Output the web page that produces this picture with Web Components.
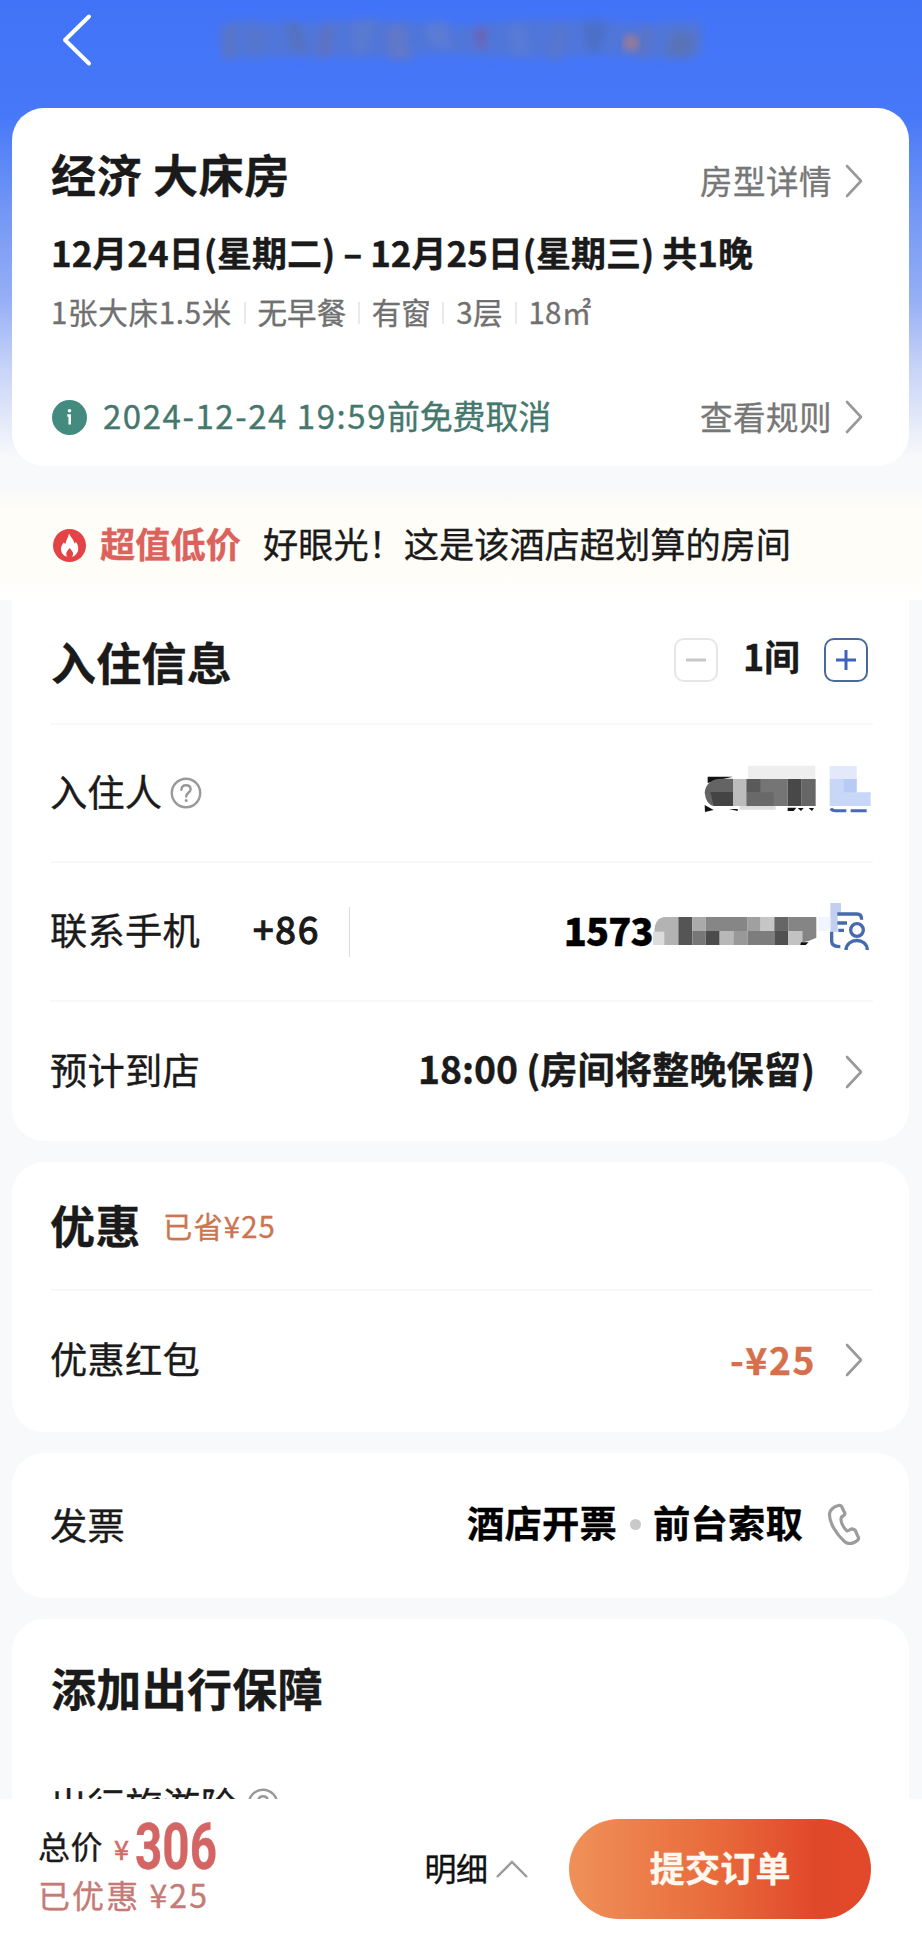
<!DOCTYPE html>
<html lang="zh-CN">
<head>
<meta charset="utf-8">
<title>订单填写</title>
<style>
body{margin:0;background:#f8f9fa;color:#1a1a1a;font-family:"Noto Sans CJK SC",sans-serif}
</style>
</head>
<body>
<booking-page></booking-page>
<script>
const define = (name, html, Base = HTMLElement) => customElements.define(name, class extends Base {
  constructor(){ super(); this.attachShadow({mode:'open'}).innerHTML = html; }
});

/* Text run of a fixed width: letter spacing (or horizontal scale) is adapted to the width. */
customElements.define('fit-text', class extends HTMLElement {
  constructor(){
    super();
    this.attachShadow({mode:'open'}).innerHTML = `<style>
      :host{display:block;flex:none;line-height:1.2;padding-bottom:.11em;white-space:pre;box-sizing:border-box;-webkit-text-stroke:.35px currentColor}
      span{display:inline-block;transform-origin:0 50%}</style><span><slot></slot></span>`;
  }
  connectedCallback(){
    const w = +this.getAttribute('w'), size = +this.getAttribute('size');
    this.style.fontSize = size + 'px';
    this.style.width = w + 'px';
    const span = this.shadowRoot.querySelector('span');
    const natural = span.getBoundingClientRect().width;
    if (this.hasAttribute('squeeze')) span.style.transform = `scaleX(${w / natural})`;
    else span.style.letterSpacing = (w - natural) / this.textContent.length + 'px';
  }
});

define('chevron-icon', `<style>:host{display:block;flex:none;width:18px;height:34px;margin-right:10px}svg{display:block}</style>
<svg width="18" height="34" viewBox="0 0 18 34" fill="none" stroke="#999" stroke-width="2.6" stroke-linejoin="round" stroke-linecap="round"><path d="M2 2L16 17L2 32"/></svg>`);

define('help-icon', `<style>:host{display:block;flex:none;margin-left:8px}svg{display:block}</style>
<svg width="32" height="32" viewBox="0 0 32 32" fill="none" stroke="#999" stroke-width="2.4"><circle cx="16" cy="16" r="14.2"/><path d="M11.4 12.8C11.5 9.8 13.5 8.3 16 8.3C18.8 8.3 20.6 10 20.6 12.4C20.6 15.4 16.2 15.8 16.2 19.6" stroke-linecap="round"/><circle cx="16.2" cy="23.6" r="1.5" fill="#999" stroke="none"/></svg>`);

define('info-card', `<style>:host{display:block;box-sizing:border-box;margin:0 13px 0 12px;background:#fff;border-radius:32px;overflow:hidden}</style><slot></slot>`);

define('info-row', `<style>:host{display:flex;align-items:center;box-sizing:border-box;margin:0 36px 0 38px}
:host([line]){border-bottom:2px solid #f8f8f8}</style><slot></slot>`);

define('top-bar', `<style>:host{display:block;height:108px}svg{display:block}</style>
<svg width="922" height="108" viewBox="0 0 922 108">
<defs><filter id="b" x="-10%" y="-30%" width="120%" height="160%"><feGaussianBlur stdDeviation="4"/></filter></defs>
<g filter="url(#b)" opacity=".6" fill="#5877c6">
<path d="M220 24L240 20L300 24L340 20L420 22L460 26L520 20L600 20L640 24L702 20V56L650 58L600 54L540 58L440 54L380 58L300 56L222 60Z"/>
<path d="M222 32L236 22V58H222Z" fill="#6675a6"/><path d="M246 24L266 32L262 58L250 48Z" fill="#6376ad"/><path d="M285 22H300L310 56L290 50Z" fill="#62729f"/>
<path d="M322 26H336L328 58H316Z" fill="#706f9d"/><path d="M350 22L378 18L370 50L354 56Z" fill="#687eb8"/><path d="M384 28L404 22L412 60H390Z" fill="#727aac"/>
<path d="M425 26L446 20L452 50L430 44Z" fill="#6d82bd"/><path d="M474 30L488 26L484 50H478Z" fill="#83567e"/><path d="M506 26L524 22L532 56H512Z" fill="#657fc0"/>
<path d="M554 30H568L560 60H548Z" fill="#6679b1"/><path d="M583 22H607L600 50L588 54Z" fill="#536ca8"/><path d="M640 24L654 30L650 58H636Z" fill="#6a76a8"/><path d="M672 30L698 34L690 58H664Z" fill="#68738f"/>
</g>
<g filter="url(#b)"><circle cx="631" cy="43" r="8" fill="#a07a92"/></g>
<path d="M89 16.500L65 40L89 63.500" fill="none" stroke="#fff" stroke-width="4" stroke-linecap="round" stroke-linejoin="round"/>
</svg>`);

define('room-card', `<style>
:host{display:block}
.spec{color:#707070;display:flex;align-items:center;margin-left:1px}
.spec i{width:2px;height:22px;background:#e9e9e9;margin:0 11.700px}
.push{margin-left:auto}
.g{color:#777}
chevron-icon{margin-left:13px}
.ok{color:#44786e}
.dot{margin:0 16px 0 2px;display:block}
</style>
<info-card style="height:358px">
<info-row style="height:137px"><fit-text w="239" size="45" style="font-weight:700;margin-left:1px">经济 大床房</fit-text><fit-text class="push g" w="132" size="32.500" style="padding-top:10px">房型详情</fit-text><chevron-icon style="margin-top:8px"></chevron-icon></info-row>
<info-row style="height:18px"><fit-text w="702" size="35" style="font-weight:700;margin-left:1px">12月24日(星期二) – 12月25日(星期三) 共1晚</fit-text></info-row>
<info-row style="height:100px"><div class="spec"><fit-text w="181" size="29.500">1张大床1.5米</fit-text><i></i><fit-text w="89" size="29.500">无早餐</fit-text><i></i><fit-text w="59" size="29.500">有窗</fit-text><i></i><fit-text w="47" size="29.500">3层</fit-text><i></i><fit-text w="63" size="29.500">18㎡</fit-text></div></info-row>
<info-row style="height:108px"><svg class="dot" width="35" height="35" viewBox="0 0 35 35"><circle cx="17.500" cy="17.500" r="17.500" fill="#438b7f"/><circle cx="17.500" cy="10.700" r="1.800" fill="#fff"/><path d="M15.200 15.500H17.700V24.500" fill="none" stroke="#fff" stroke-width="2.500"/></svg><fit-text class="ok" w="284" size="33" style="padding-bottom:2px">2024-12-24 19:59</fit-text><fit-text class="ok" w="164" size="33" style="padding-bottom:2px">前免费取消</fit-text><fit-text class="push g" w="132" size="32.500">查看规则</fit-text><chevron-icon></chevron-icon></info-row>
</info-card>`);

define('deal-banner', `<style>:host{display:flex;align-items:center;height:112px;padding:2px 51px 0 52px;background:linear-gradient(#f8f9fa,#fffdf7 24%,#fffdf8 75%,#fff);margin-top:22px;box-sizing:border-box}
svg{display:block;margin-right:13px}.hot{color:#dc625c;font-weight:700;margin-right:22px}</style>
<svg width="35" height="35" viewBox="0 0 35 35"><circle cx="17.500" cy="17.500" r="16.500" fill="#e34347"/><path d="M17 5.500C18.500 9 22 11.500 22.300 15.500L24 14C26 17 26.500 19 26.200 21.500C25.800 25.500 23 28 19.800 28.800C22 26 21.500 24.500 17.600 20C14 24 13.500 26 15.300 28.800C11.500 27.800 9 25 9 21C9 18 10.500 16.500 11.500 14.500L13.500 16C13.800 12 16.500 9.500 17 5.500Z" fill="#fff"/></svg>
<fit-text class="hot" w="141" size="35.200">超值低价</fit-text><fit-text w="528" size="35.200">好眼光！这是该酒店超划算的房间</fit-text>`);

define('room-stepper', `<style>:host{display:flex;align-items:center;margin:-3px 5px 0 auto;font-weight:700}svg{display:block}fit-text{margin:-4px 24px 0 25px}</style>
<svg width="44" height="44" viewBox="0 0 44 44" fill="none"><rect x="1" y="1" width="42" height="42" rx="9" stroke="#e6e6e6" stroke-width="2"/><path d="M12 22H32" stroke="#c8c8c8" stroke-width="3"/></svg>
<fit-text w="57" size="36">1间</fit-text>
<svg width="44" height="44" viewBox="0 0 44 44" fill="none"><rect x="1" y="1" width="42" height="42" rx="9" stroke="#4a6a9b" stroke-width="2"/><path d="M12 22H32M22 12V32" stroke="#3e63bd" stroke-width="3"/></svg>`);

define('masked-name', `<style>:host{display:block;margin-left:auto}svg{display:block}</style>
<svg width="169.670" height="60" viewBox="190 66 509 180">
<path d="M204 107H280L240 116L204 126ZM195 192L222 207L196 213ZM268 204H294V210ZM444 200H470L462 210H444ZM474 201H492L484 210ZM507 201H523L517 210Z" fill="#111"/>
<path d="M325 74H527V114H325Z" fill="#eee"/><path d="M280 114H322V195H280Z" fill="#bcbcbc"/><path d="M300 195H408V206H300Z" fill="#dedede"/>
<path d="M195 155Q200 114 244 113H280V195H222Q199 190 195 155Z" fill="#646464"/><path d="M212 153H280V195H222Z" fill="#444"/>
<path d="M321 114H444V195H321Z" fill="#757575"/><path d="M321 114H362V154H321Z" fill="#5a5a5a"/><path d="M321 154H402V195H321Z" fill="#696969"/><path d="M444 114H486V195H444Z" fill="#484848"/><path d="M486 114H528V195H486Z" fill="#666"/>
<path d="M570 75H651V114H570Z" fill="#e3e9fb"/><path d="M570 114H651V154H693V195H570Z" fill="#c8d7f8"/><path d="M612 114H651V154H612Z" fill="#b8cbf4"/>
<path d="M574 202Q577 209 587 209H620M633 209H681" stroke="#456bb8" stroke-width="9" fill="none"/>
</svg>`);

define('masked-phone', `<style>:host{display:block;flex:none}svg{display:block}</style>
<svg width="220.330" height="60" viewBox="38 483 661 180">
<path d="M42 575Q42 528 76 528H114V612H42Z" fill="#b3b3b3"/><path d="M38 572H72V612H38Z" fill="#dcdcdc"/>
<path d="M114 528H156V612H114Z" fill="#555"/><path d="M156 528H196V570H156Z" fill="#aaa"/><path d="M196 528H322V570H196Z" fill="#868686"/><path d="M322 528H361V570H322Z" fill="#a0a0a0"/><path d="M361 528H402V570H361Z" fill="#c6c6c6"/><path d="M402 528H444V570H402Z" fill="#666"/><path d="M444 528H528V570H444Z" fill="#858585"/>
<path d="M156 570H196V612H156Z" fill="#777"/><path d="M196 570H238V612H196Z" fill="#4c4c4c"/><path d="M238 570H279V612H238Z" fill="#b8b8b8"/><path d="M279 570H322V612H279Z" fill="#999"/><path d="M322 570H402V612H322Z" fill="#7d7d7d"/><path d="M402 570H444V612H402Z" fill="#505050"/><path d="M444 570H486V612H444Z" fill="#c2c2c2"/><path d="M486 570H528V590L505 600L486 604Z" fill="#858585"/><path d="M482 604H505L496 612H480Z" fill="#111"/>
<path d="M570 486H602V515H592V572H570Z" fill="#c2d0f0"/><path d="M534 528H570V570H534Z" fill="#f1f5fd"/>
<g fill="none" stroke="#456bac" stroke-width="10"><path d="M591 519H650Q664 519 664 536M591 546H620M594 568H611M574 572V602Q575 617 600 617"/><circle cx="650" cy="567" r="19"/><path d="M617 627C618 590 680 588 681 627"/></g>
</svg>`);

define('guest-card', `<style>:host{display:block}
.push{margin-left:auto}.bar{width:1px;height:50px;background:#ddd;margin-left:29px}.h{font-weight:700}
chevron-icon{margin-left:30px}</style>
<info-card style="height:541px;border-radius:0 0 32px 32px">
<info-row line style="height:125px"><fit-text class="h" w="181" size="45" style="padding-top:6px;margin-left:1px">入住信息</fit-text><room-stepper></room-stepper></info-row>
<info-row line style="height:138px"><fit-text w="112" size="37.300">入住人</fit-text><help-icon></help-icon><masked-name></masked-name></info-row>
<info-row line style="height:139px"><fit-text w="150" size="37.300">联系手机</fit-text><fit-text w="67" size="37" style="-webkit-text-stroke:1.300px;margin-left:53px;padding-bottom:6px">+86</fit-text><div class="bar"></div><fit-text class="push" w="89" size="38" style="font-weight:900;color:#000">1573</fit-text><masked-phone></masked-phone></info-row>
<info-row style="height:139px"><fit-text w="150" size="37.300">预计到店</fit-text><fit-text class="push h" w="397" size="37.300" style="padding-bottom:6px">18:00 (房间将整晚保留)</fit-text><chevron-icon></chevron-icon></info-row>
</info-card>`);

define('discount-card', `<style>:host{display:block;margin-top:21px}.h{font-weight:700}.o{color:#cb7650}.push{margin-left:auto}chevron-icon{margin-left:29px}</style>
<info-card style="height:270px">
<info-row line style="height:129px"><fit-text class="h" w="91" size="45" style="padding-bottom:2px">优惠</fit-text><fit-text class="o" w="113" size="29.300" style="margin-left:22px;padding-top:3px">已省¥25</fit-text></info-row>
<info-row style="height:138px"><fit-text w="150" size="37.300">优惠红包</fit-text><fit-text class="push h" w="86" size="37.300" style="color:#d66f4c;padding-bottom:2px">-¥25</fit-text><chevron-icon></chevron-icon></info-row>
</info-card>`);

define('invoice-card', `<style>:host{display:block;margin-top:21px}.h{font-weight:700;color:#000;padding-bottom:7px}.d{width:11px;height:11px;border-radius:50%;background:#c9c9c9;margin:-4px 12px 0 13px}.push{margin-left:auto}.ph{display:block;margin:-4px 12px 0 24px}</style>
<info-card style="height:145px">
<info-row style="height:146px"><fit-text w="75" size="37.300">发票</fit-text><fit-text class="h push" w="150" size="37.300">酒店开票</fit-text><div class="d"></div><fit-text class="h" w="150" size="37.300">前台索取</fit-text>
<svg class="ph" width="34" height="42" viewBox="0 0 34 42" fill="none" stroke="#9c9c9c" stroke-width="3.200" stroke-linejoin="round"><path d="M11.500 2.500C13.500 2 14.800 3 15.300 5L18 10.500C18.300 12 15.300 13 14.300 14.500C13 18 16.500 25.500 20 27.800C21.500 28.500 23.500 25.500 25.500 26L28 27C29 28.500 30 32 31.500 34.500C32 36.500 30 38 28 39C24.500 41 20.500 41 17.500 38.500C9.500 31.500 2.500 20 2.500 11.500C2.500 7 7 3.500 11.500 2.500Z"/></svg></info-row>
</info-card>`);

define('cover-card', `<style>:host{display:block;margin-top:21px;height:180px;overflow:hidden}.h{font-weight:700}</style>
<info-card style="height:240px">
<info-row style="height:142px"><fit-text class="h" w="272" size="45" style="margin-left:1px">添加出行保障</fit-text></info-row>
<info-row style="height:86px"><fit-text w="188" size="37.300" style="padding:0">出行旅游险</fit-text><help-icon style="margin-left:9px"></help-icon></info-row>
</info-card>`);

define('pay-bar', `<style>:host{display:flex;align-items:center;height:141px;box-sizing:border-box;background:#fff;padding:0 51px 2px 38px}
.sum{width:387px;display:flex;flex-direction:column;padding-top:4px}
.r{display:flex;align-items:center;height:50px}
.r2{color:#c57a76;height:48px;display:flex;align-items:center}
.y{color:#d16a68;margin:9px 6px 0 11px;-webkit-text-stroke:.5px}
.n{color:#d36664;font-family:Roboto,sans-serif;font-weight:700;padding:0;line-height:.8}
.up{display:block;margin:0 41px 0 9px}
button{width:302px;height:100px;border:0;padding:0;border-radius:50px;background:linear-gradient(90deg,#ef9159,#e96b3c 48%,#e0482a 82%,#e2492a);display:flex;justify-content:center;align-items:center;color:#fff8ef;font-family:inherit;font-weight:700}
</style>
<div class="sum"><div class="r"><fit-text w="65" size="32">总价</fit-text><fit-text class="y" w="15" size="27" squeeze>¥</fit-text><fit-text class="n" w="82" size="65" squeeze>306</fit-text></div>
<div class="r2"><fit-text w="171" size="32">已优惠 ¥25</fit-text></div></div>
<fit-text w="63" size="32" style="color:#111">明细</fit-text><svg class="up" width="32" height="18" viewBox="0 0 32 18" fill="none" stroke="#999" stroke-width="2.400"><path d="M1 17L16 2L31 17"/></svg>
<button><fit-text w="141" size="35">提交订单</fit-text></button>`);

define('booking-page', `<style>:host{display:block;width:922px;height:1940px;overflow:hidden;background:linear-gradient(#4173f8 0,#4778f8 115px,#7598f5 215px,#96aff5 300px,#c8d4f8 370px,#f8f9fa 458px)}</style>
<top-bar></top-bar><room-card></room-card><deal-banner></deal-banner><guest-card></guest-card><discount-card></discount-card><invoice-card></invoice-card><cover-card></cover-card><pay-bar></pay-bar>`);
</script>
</body>
</html>
